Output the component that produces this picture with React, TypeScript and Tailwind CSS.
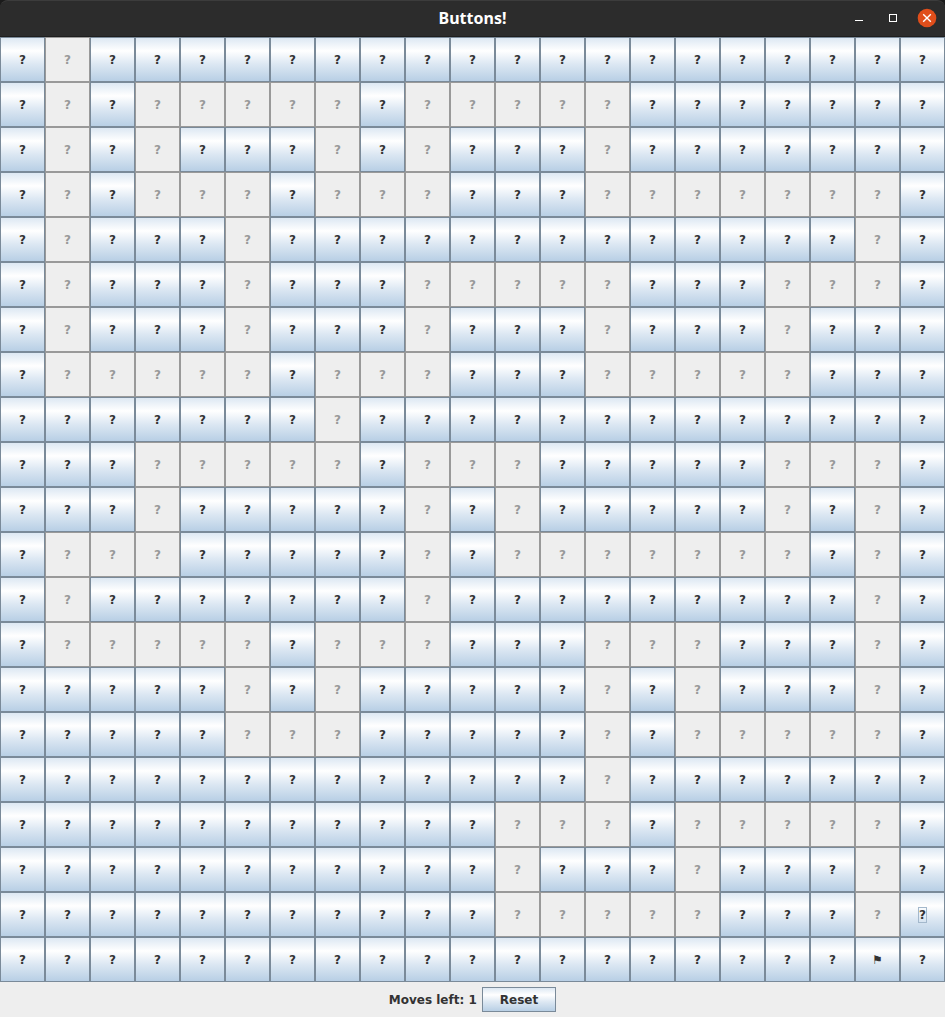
import { useState } from 'react';

// "#" is a button that can still be pressed, "." a used one, "F" the goal flag.
const START = [
  '#.###################',
  '#.#.....#.....#######',
  '#.#.###.#.###.#######',
  '#.#...#...###.......#',
  '#.###.#############.#',
  '#.###.###.....###...#',
  '#.###.###.###.###.###',
  '#.....#...###.....###',
  '#######.#############',
  '###.....#...#####...#',
  '###.#####.#.#####.#.#',
  '#...#####.#.......#.#',
  '#.#######.#########.#',
  '#.....#...###...###.#',
  '#####.#.#####.#.###.#',
  '#####...#####.#.....#',
  '#############.#######',
  '###########...#.....#',
  '###########.###.###.#',
  '###########.....###.#',
  '###################F#',
];

const METAL =
  'border border-[#7a8a99] bg-[linear-gradient(to_bottom,#dde8f3_0%,#ffffff_30%,#dde8f3_60%,#b8cfe5_100%)]';

function TitleBar() {
  return (
    <header className="bg-[#1b1b1b]">
      <div className="grid h-[37px] grid-cols-[1fr_auto_1fr] items-center rounded-t-lg border-t border-b border-t-[#3c3c3c] border-b-[#1e1e1e] bg-[#2c2c2c] pb-px">
        <span />
        <h1 className="pt-px font-['Noto_Sans',sans-serif] text-base leading-[23px] font-bold text-white">Buttons!</h1>
        <div className="flex items-center justify-end gap-4 pr-2">
          <button type="button" aria-label="Minimize" className="h-5 w-[18px]">
            <svg viewBox="0 0 18 20" className="h-5 w-[18px]" shapeRendering="crispEdges">
              <rect x="6" y="12" width="8" height="1" fill="#fff" />
            </svg>
          </button>
          <button type="button" aria-label="Maximize" className="h-5 w-[18px]">
            <svg viewBox="0 0 18 20" className="h-5 w-[18px]" shapeRendering="crispEdges">
              <rect x="6.5" y="6.5" width="7" height="7" fill="none" stroke="#fff" />
            </svg>
          </button>
          <button type="button" aria-label="Close" className="h-5 w-5">
            <svg viewBox="0 0 20 20" className="h-5 w-5">
              <circle cx="10" cy="10" r="9.3" fill="#e04e1b" />
              <path d="M6.2 6.2l7.6 7.6M13.8 6.2l-7.6 7.6" stroke="#fff" strokeWidth="1.4" />
            </svg>
          </button>
        </div>
      </div>
    </header>
  );
}

type CellProps = { kind: string; focused: boolean; onPress: () => void };

function Cell({ kind, focused, onPress }: CellProps) {
  if (kind === '.') {
    return (
      <button type="button" disabled className="flex aspect-square items-center justify-center border border-[#999999] bg-[#eeeeee] text-[#999999]">
        ?
      </button>
    );
  }
  return (
    <button type="button" onClick={onPress} className={`flex aspect-square items-center justify-center text-[#333333] ${METAL}`}>
      <span className={focused ? 'outline outline-[#a3b8cc]' : ''}>{kind === 'F' ? '⚑' : '?'}</span>
    </button>
  );
}

export default function App() {
  const [rows, setRows] = useState(START);
  const [focus, setFocus] = useState('19-20');
  const [moves, setMoves] = useState(1);

  const press = (r: number, c: number) => {
    if (moves === 0) return;
    setRows(rows.map((row, i) => (i === r ? row.slice(0, c) + '.' + row.slice(c + 1) : row)));
    setFocus(`${r}-${c}`);
    setMoves(moves - 1);
  };

  const reset = () => {
    setRows(START);
    setFocus('19-20');
    setMoves(1);
  };

  return (
    <div className="flex min-h-screen flex-col bg-[#eeeeee] font-['DejaVu_Sans',sans-serif] text-xs leading-[14px] font-bold text-[#333333]">
      <TitleBar />
      <main className="grid grid-cols-[repeat(21,minmax(0,1fr))]">
        {rows.map((row, r) =>
          row.split('').map((kind, c) => (
            <Cell key={`${r}-${c}`} kind={kind} focused={focus === `${r}-${c}`} onPress={() => press(r, c)} />
          )),
        )}
      </main>
      <footer className="flex items-center justify-center gap-[5px] py-[5px]">
        <p>Moves left: {moves}</p>
        <button type="button" onClick={reset} className={`h-[25px] px-[17px] ${METAL}`}>
          Reset
        </button>
      </footer>
    </div>
  );
}
